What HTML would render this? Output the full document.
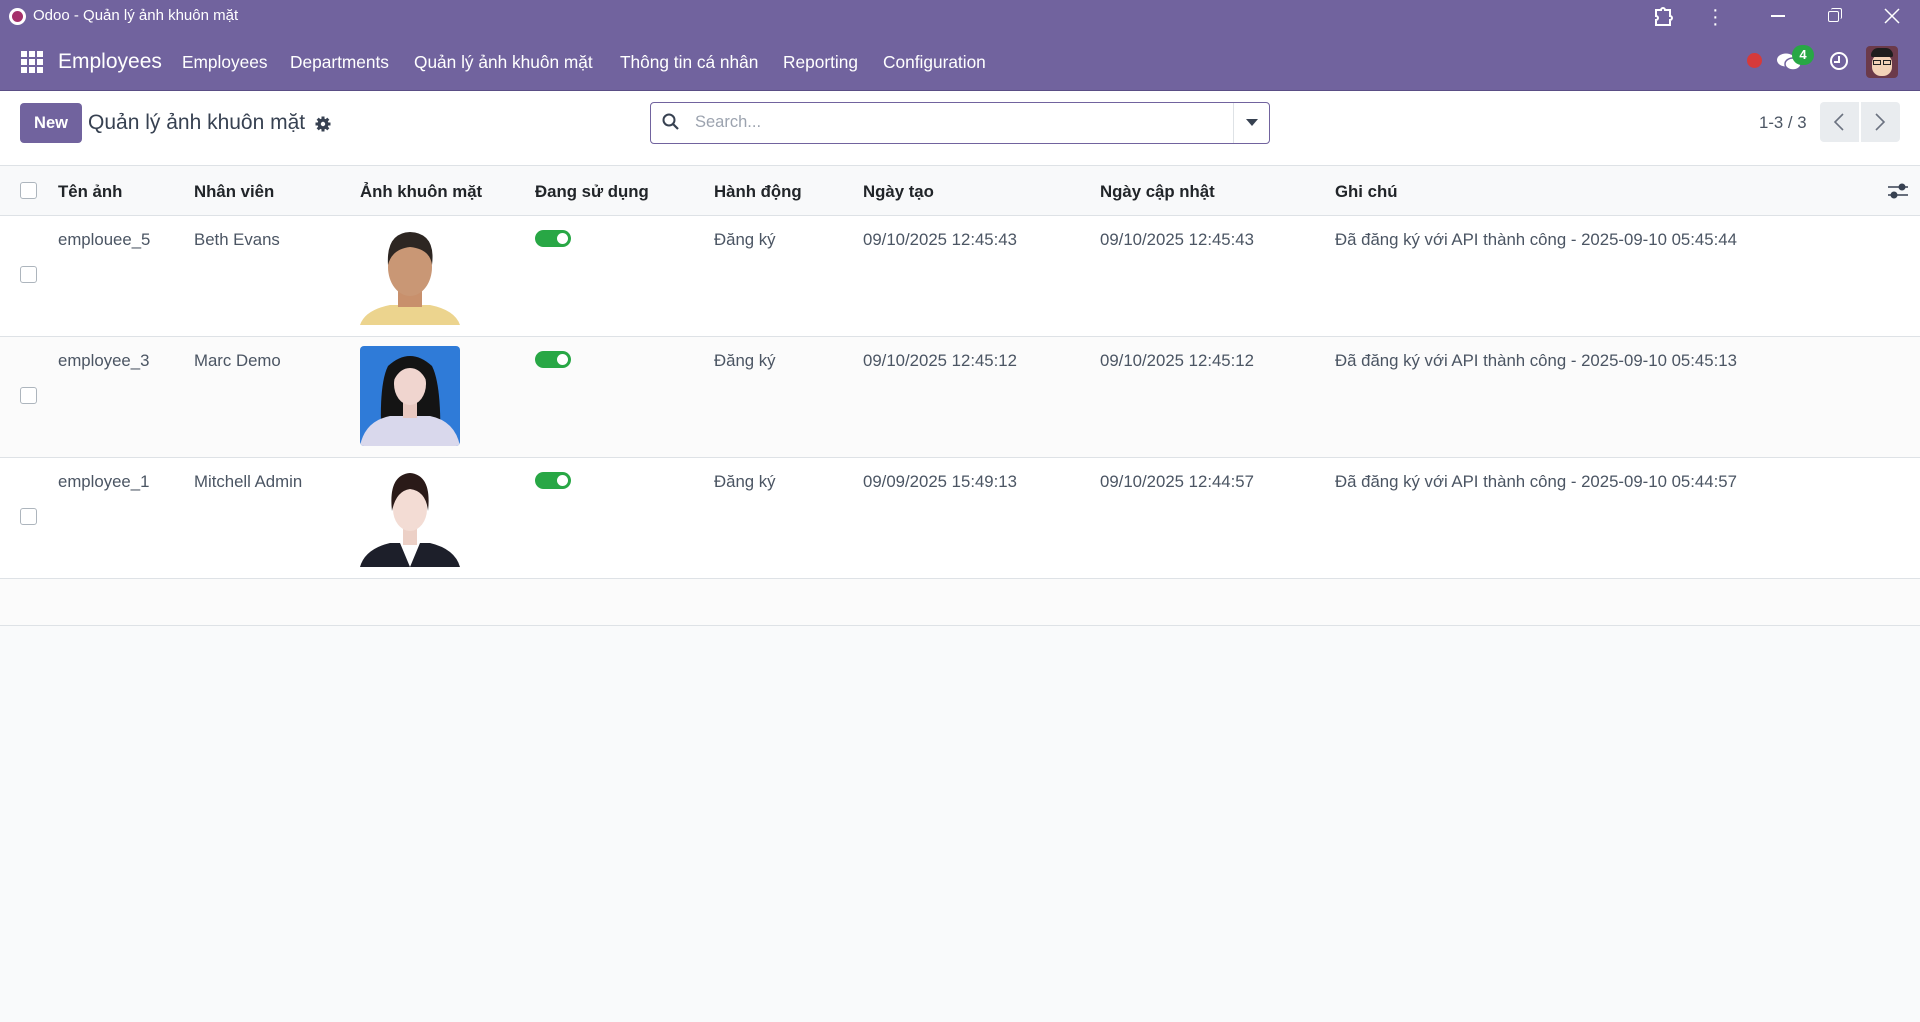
<!DOCTYPE html>
<html><head><meta charset="utf-8"><style>
*{box-sizing:border-box;margin:0;padding:0}
body{width:1920px;height:1022px;background:#f9fafb;font-family:"Liberation Sans","Noto Sans CJK SC",sans-serif;color:#374151;position:relative;overflow:hidden}
.a{position:absolute;white-space:nowrap}
#top{position:absolute;left:0;top:0;width:1920px;height:90px;background:#71639e;color:#fff}
#cp{position:absolute;left:0;top:90px;width:1920px;height:75px;background:#fff;border-top:1px solid #5a4e85}
.nav{font-size:17.3px;top:52px;color:#fff}
.hdr{position:absolute;left:0;top:165px;width:1920px;height:51px;background:#f8f9fa;border-top:1px solid #dee2e6;border-bottom:1px solid #dee2e6}
.hdr .a{top:16px;font-size:16.8px;font-weight:bold;color:#212529}
.row{position:absolute;left:0;width:1920px;height:121px;border-bottom:1px solid #dee2e6;background:#fff}
.row .a{top:14px;font-size:16.8px;color:#4b5563}
.cb{position:absolute;width:17px;height:17px;border:1px solid #adb5bd;border-radius:3px;background:#fff}
.tg{position:absolute;left:535px;top:14px;width:36px;height:17px;border-radius:9px;background:#28a745}
.tg:after{content:"";position:absolute;right:3px;top:3px;width:11px;height:11px;border-radius:50%;background:#fff}
.img{position:absolute;left:360px;top:9px;width:100px;height:100px}
</style></head><body>
<div id="top">
 <div class="a" style="left:9px;top:8px;width:17px;height:17px;border-radius:50%;background:#fff"></div>
 <div class="a" style="left:12px;top:11px;width:11px;height:11px;border-radius:50%;background:#a5316b"></div>
 <div class="a" style="left:33px;top:7px;font-size:15px;color:#fff">Odoo - Quản lý ảnh khuôn mặt</div>
 <svg class="a" style="left:1652px;top:6px" width="22" height="22" viewBox="0 0 22 22"><path d="M4 4h5a2 2 0 0 1 4 0h5v6a2 2 0 0 1 0 4v5H4v-5a2 2 0 0 0 0-4z" fill="none" stroke="#fff" stroke-width="2"/></svg>
 <div class="a" style="left:1712px;top:7px;width:4px;line-height:7px;font-size:20px;color:#fff">·<br>·<br>·</div>
 <div class="a" style="left:1771px;top:15px;width:14px;height:1.5px;background:#fff"></div>
 <div class="a" style="left:1828px;top:11px;width:11px;height:11px;border:1.5px solid #fff;border-radius:2px"></div>
 <div class="a" style="left:1831px;top:8px;width:11px;height:11px;border-top:1.5px solid #fff;border-right:1.5px solid #fff;border-radius:2px"></div>
 <svg class="a" style="left:1884px;top:8px" width="16" height="16"><path d="M1 1L15 15M15 1L1 15" stroke="#fff" stroke-width="1.5"/></svg>
 <svg class="a" style="left:21px;top:51px" width="22" height="22"><g fill="#fff"><rect x="0" y="0" width="6" height="6"/><rect x="8" y="0" width="6" height="6"/><rect x="16" y="0" width="6" height="6"/><rect x="0" y="8" width="6" height="6"/><rect x="8" y="8" width="6" height="6"/><rect x="16" y="8" width="6" height="6"/><rect x="0" y="16" width="6" height="6"/><rect x="8" y="16" width="6" height="6"/><rect x="16" y="16" width="6" height="6"/></g></svg>
 <div class="a" style="left:58px;top:50px;font-size:21px;color:#fff">Employees</div>
 <div class="a nav" style="left:182px">Employees</div>
 <div class="a nav" style="left:290px">Departments</div>
 <div class="a nav" style="left:414px">Quản lý ảnh khuôn mặt</div>
 <div class="a nav" style="left:620px">Thông tin cá nhân</div>
 <div class="a nav" style="left:783px">Reporting</div>
 <div class="a nav" style="left:883px">Configuration</div>
 <div class="a" style="left:1747px;top:53px;width:15px;height:15px;border-radius:50%;background:#d63a3a"></div>
 <svg class="a" style="left:1776px;top:52px" width="26" height="20"><ellipse cx="10" cy="8" rx="9" ry="6.5" fill="#fff"/><ellipse cx="17" cy="12" rx="8" ry="6" fill="#fff" stroke="#71639e" stroke-width="1.5"/></svg>
 <div class="a" style="left:1792px;top:45px;width:22px;height:20px;border-radius:10px;background:#28a745;color:#fff;font-size:13px;font-weight:bold;text-align:center;line-height:20px">4</div>
 <div class="a" style="left:1830px;top:52px;width:18px;height:18px;border:2.5px solid #fff;border-radius:50%"></div>
 <div class="a" style="left:1838px;top:56px;width:2px;height:6px;background:#fff"></div>
 <div class="a" style="left:1834px;top:61px;width:6px;height:2px;background:#fff"></div>
 <div class="a" style="left:1866px;top:46px;width:32px;height:32px;border-radius:4px;background:#6b3a4a;overflow:hidden">
  <div style="position:absolute;left:6px;top:8px;width:20px;height:22px;border-radius:9px;background:#f2d3b8"></div>
  <div style="position:absolute;left:5px;top:2px;width:22px;height:9px;border-radius:8px 8px 2px 2px;background:#1e1e1e"></div>
  <div style="position:absolute;left:7px;top:14px;width:8px;height:5px;border:1.5px solid #222"></div>
  <div style="position:absolute;left:17px;top:14px;width:8px;height:5px;border:1.5px solid #222"></div>
 </div>
</div>
<div id="cp">
 <div class="a" style="left:20px;top:12px;width:62px;height:40px;background:#71639e;border-radius:4px;color:#fff;font-weight:bold;font-size:16.5px;text-align:center;line-height:40px">New</div>
 <div class="a" style="left:88px;top:20px;font-size:21px;color:#374151">Quản lý ảnh khuôn mặt</div>
 <svg class="a" style="left:315px;top:25px" width="16" height="16" viewBox="0 0 16 16"><g fill="#374151"><circle cx="8" cy="8" r="5.5"/><rect x="6.5" y="0.5" width="3" height="15"/><rect x="0.5" y="6.5" width="15" height="3"/><rect x="6.5" y="0.5" width="3" height="15" transform="rotate(45 8 8)"/><rect x="6.5" y="0.5" width="3" height="15" transform="rotate(-45 8 8)"/></g><circle cx="8" cy="8" r="2.2" fill="#fff"/></svg>
 <div class="a" style="left:650px;top:11px;width:620px;height:42px;border:1px solid #71639e;border-radius:4px;background:#fff"></div>
 <div class="a" style="left:1233px;top:12px;width:1px;height:40px;background:#dee2e6"></div>
 <svg class="a" style="left:662px;top:22px" width="18" height="18"><circle cx="7" cy="7" r="5.5" fill="none" stroke="#374151" stroke-width="2"/><path d="M11 11l5 5" stroke="#374151" stroke-width="2.2"/></svg>
 <div class="a" style="left:695px;top:22px;font-size:16.5px;color:#9ca3af">Search...</div>
 <svg class="a" style="left:1246px;top:28px" width="12" height="8"><path d="M0 0h12L6 7z" fill="#374151"/></svg>
 <div class="a" style="left:1759px;top:22px;font-size:16.8px;color:#4b5563">1-3 / 3</div>
 <div class="a" style="left:1820px;top:11px;width:39px;height:40px;background:#e9ecef;border-radius:4px 0 0 4px"></div>
 <div class="a" style="left:1861px;top:11px;width:39px;height:40px;background:#e9ecef;border-radius:0 4px 4px 0"></div>
 <svg class="a" style="left:1833px;top:22px" width="12" height="18"><path d="M10 1L2 9l8 8" fill="none" stroke="#6b7280" stroke-width="1.6"/></svg>
 <svg class="a" style="left:1874px;top:22px" width="12" height="18"><path d="M2 1l8 8-8 8" fill="none" stroke="#6b7280" stroke-width="1.6"/></svg>
</div>
<div class="hdr">
 <div class="cb" style="left:20px;top:16px"></div>
 <div class="a" style="left:58px">Tên ảnh</div>
 <div class="a" style="left:194px">Nhân viên</div>
 <div class="a" style="left:360px">Ảnh khuôn mặt</div>
 <div class="a" style="left:535px">Đang sử dụng</div>
 <div class="a" style="left:714px">Hành động</div>
 <div class="a" style="left:863px">Ngày tạo</div>
 <div class="a" style="left:1100px">Ngày cập nhật</div>
 <div class="a" style="left:1335px">Ghi chú</div>
 <svg class="a" style="left:1888px;top:16px;position:absolute" width="20" height="18"><path d="M0 5h20M0 13h20" stroke="#374151" stroke-width="1.5"/><circle cx="14" cy="5" r="3.5" fill="#374151"/><circle cx="6" cy="13" r="3.5" fill="#374151"/></svg>
</div>

<div class="row" style="top:216px">
 <div class="cb" style="left:20px;top:50px"></div>
 <div class="a" style="left:58px">emplouee_5</div>
 <div class="a" style="left:194px">Beth Evans</div>
 <svg class="img" viewBox="0 0 100 100"><rect width="100" height="100" fill="#fff"/><path d="M0 100 Q5 85 30 80 L70 80 Q95 85 100 100z" fill="#ecd48e"/><rect x="38" y="60" width="24" height="22" fill="#c8906c"/><ellipse cx="50" cy="42" rx="22" ry="29" fill="#c99775"/><path d="M28 40 Q26 8 50 7 Q76 8 72 40 Q70 24 50 22 Q32 24 28 40z" fill="#2d2622"/></svg>
 <div class="tg"></div>
 <div class="a" style="left:714px">Đăng ký</div>
 <div class="a" style="left:863px">09/10/2025 12:45:43</div>
 <div class="a" style="left:1100px">09/10/2025 12:45:43</div>
 <div class="a" style="left:1335px">Đã đăng ký với API thành công - 2025-09-10 05:45:44</div>
</div>
<div class="row" style="top:337px;background:#fbfbfb">
 <div class="cb" style="left:20px;top:50px"></div>
 <div class="a" style="left:58px">employee_3</div>
 <div class="a" style="left:194px">Marc Demo</div>
 <svg class="img" viewBox="0 0 100 100"><defs><clipPath id="c2"><rect width="100" height="100" rx="4"/></clipPath></defs><g clip-path="url(#c2)"><rect width="100" height="100" fill="#2f7bd8"/><path d="M22 100 Q18 40 28 20 Q50 0 72 20 Q82 40 80 100z" fill="#141414"/><path d="M0 100 Q5 75 30 70 L70 70 Q95 75 100 100z" fill="#d9d8ec"/><rect x="43" y="52" width="14" height="20" fill="#e8c8c0"/><ellipse cx="50" cy="38" rx="16" ry="21" fill="#f0d5cf"/><path d="M34 34 Q36 16 50 15 Q64 16 66 34 Q60 22 50 22 Q40 22 34 34z" fill="#141414"/></g></svg>
 <div class="tg"></div>
 <div class="a" style="left:714px">Đăng ký</div>
 <div class="a" style="left:863px">09/10/2025 12:45:12</div>
 <div class="a" style="left:1100px">09/10/2025 12:45:12</div>
 <div class="a" style="left:1335px">Đã đăng ký với API thành công - 2025-09-10 05:45:13</div>
</div>
<div class="row" style="top:458px">
 <div class="cb" style="left:20px;top:50px"></div>
 <div class="a" style="left:58px">employee_1</div>
 <div class="a" style="left:194px">Mitchell Admin</div>
 <svg class="img" viewBox="0 0 100 100"><rect width="100" height="100" fill="#fff"/><path d="M0 100 Q5 82 30 76 L70 76 Q95 82 100 100z" fill="#1d1f2a"/><path d="M40 76 L50 100 L60 76z" fill="#fff"/><rect x="43" y="58" width="14" height="20" fill="#ecd0c6"/><ellipse cx="50" cy="42" rx="17" ry="22" fill="#f3dcd4"/><path d="M32 44 Q28 8 50 6 Q72 8 68 44 Q66 24 50 22 Q36 24 32 44z" fill="#2a1a18"/></svg>
 <div class="tg"></div>
 <div class="a" style="left:714px">Đăng ký</div>
 <div class="a" style="left:863px">09/09/2025 15:49:13</div>
 <div class="a" style="left:1100px">09/10/2025 12:44:57</div>
 <div class="a" style="left:1335px">Đã đăng ký với API thành công - 2025-09-10 05:44:57</div>
</div>
<div class="a" style="left:0;top:579px;width:1920px;height:47px;background:#fbfbfb;border-bottom:1px solid #dee2e6"></div>
</body></html>
